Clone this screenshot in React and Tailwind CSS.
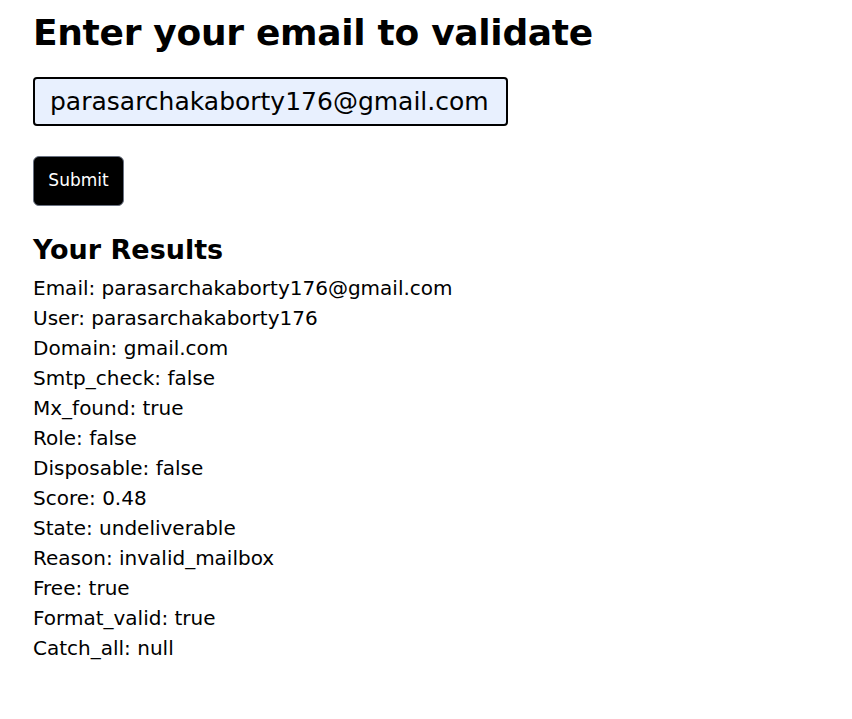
import React, { useState } from "react";

const result = {
  email: "parasarchakaborty176@gmail.com",
  user: "parasarchakaborty176",
  domain: "gmail.com",
  smtp_check: false,
  mx_found: true,
  role: false,
  disposable: false,
  score: 0.48,
  state: "undeliverable",
  reason: "invalid_mailbox",
  free: true,
  format_valid: true,
  catch_all: null,
};

const label = (key) => key.charAt(0).toUpperCase() + key.slice(1);

export default function App() {
  const [email, setEmail] = useState("parasarchakaborty176@gmail.com");

  return (
    <div className="min-h-screen bg-white text-black px-[33px] font-['DejaVu_Sans',sans-serif]">
      <h1 className="pt-[9px] text-[36px] leading-[48px] font-bold tracking-[-0.3px]">
        Enter your email to validate
      </h1>

      <form className="mt-[20px]" onSubmit={(e) => e.preventDefault()}>
        <input
          type="text"
          value={email}
          onChange={(e) => setEmail(e.target.value)}
          className="block w-[475px] h-[49px] px-[15px] bg-[#e8f0fe] border-2 border-black rounded-[4px] text-[25px] outline-none"
        />
        <button
          type="submit"
          className="mt-[30px] block w-[91px] h-[50px] bg-black text-white text-[17px] rounded-[6px] border border-gray-500"
        >
          Submit
        </button>
      </form>

      <h2 className="mt-[26px] text-[27px] leading-[36px] font-bold">Your Results</h2>
      <div className="mt-[5px] text-[20px] leading-[30px]">
        {Object.entries(result).map(([k, v]) => (
          <p key={k}>
            {label(k)}: {v === null ? "null" : String(v)}
          </p>
        ))}
      </div>
    </div>
  );
}
